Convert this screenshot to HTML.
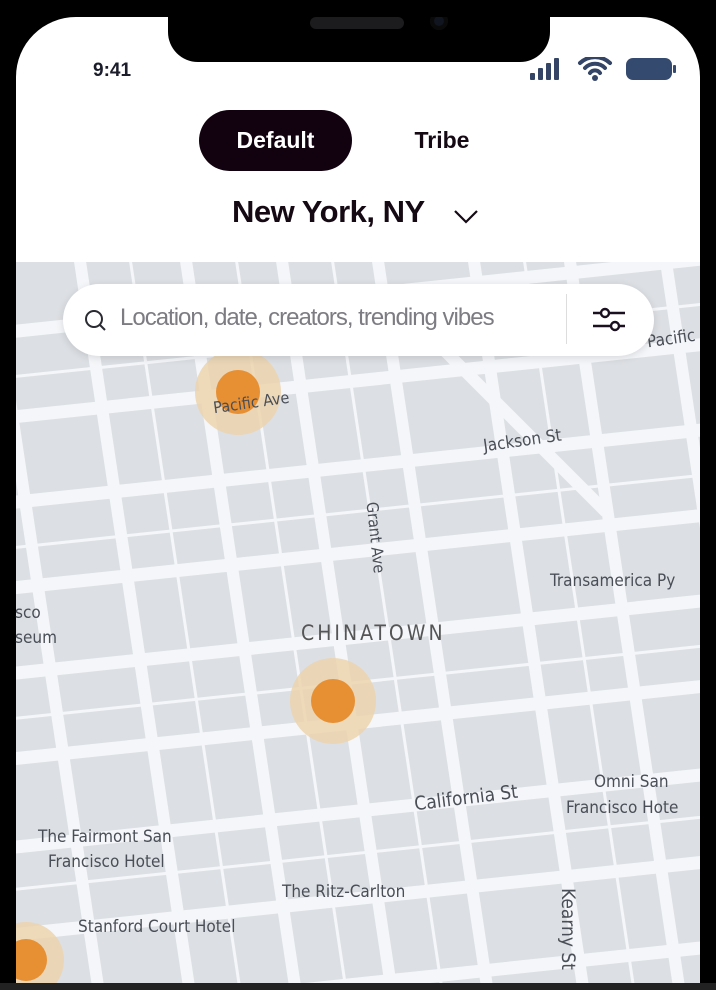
<!DOCTYPE html>
<html><head><meta charset="utf-8"><style>
html,body{margin:0;padding:0;background:#000;width:716px;height:990px;overflow:hidden;}
body{position:relative;font-family:"Liberation Sans",sans-serif;}
.screen{position:absolute;left:16px;top:17px;width:684px;height:966px;background:#fff;border-radius:60px 60px 0 0;overflow:hidden;}
.notch{position:absolute;left:152px;top:0;width:382px;height:45px;background:#000;border-radius:0 0 30px 30px;}
.spk{position:absolute;left:294px;top:0px;width:94px;height:12px;border-radius:6px;background:#1c1c1e;}
.cam{position:absolute;left:414px;top:-5px;width:18px;height:18px;border-radius:50%;background:#10151f;box-shadow:inset 0 0 0 4px #0a0a0a;}
.frame{position:absolute;left:0;top:983px;width:716px;height:7px;background:#222;}
.time{position:absolute;left:93px;top:60px;font-size:19px;font-weight:bold;color:#1b1d2b;}
.tab{position:absolute;top:110px;height:61px;font-size:23px;font-weight:bold;line-height:61px;text-align:center;}
.city{position:absolute;left:232px;top:194px;font-size:31px;color:#150a14;font-weight:bold;letter-spacing:-0.5px}
.search{position:absolute;left:63px;top:284px;width:591px;height:72px;border-radius:36px;background:#fff;box-shadow:0 2px 8px rgba(0,0,0,.12);}
.search .ph{position:absolute;left:57px;top:20px;font-size:24px;color:#7c7c82;letter-spacing:-1px;white-space:nowrap}
.lbl{position:absolute;font-family:"DejaVu Sans Condensed","DejaVu Sans",sans-serif;color:#4a4f57;font-size:17px;white-space:nowrap}
.wrap{position:absolute;left:0;top:0;width:716px;height:983px;overflow:hidden;}
</style></head><body>
<div class="wrap">
<div class="screen">
<svg style="position:absolute;left:0;top:245px" width="684" height="721">
<rect width="684" height="721" fill="#dcdfe3"/>
<g transform="rotate(-6 342 360)" stroke="#f4f6f9" fill="none">
<g stroke-width="13">
<line x1="-100" y1="120" x2="800" y2="120"/>
<line x1="-100" y1="205" x2="800" y2="205"/>
<line x1="-100" y1="290" x2="800" y2="290"/>
<line x1="-100" y1="375" x2="800" y2="375"/>
<line x1="-100" y1="460" x2="800" y2="460"/>
<line x1="-100" y1="548" x2="800" y2="548"/>
<line x1="-100" y1="635" x2="800" y2="635"/>
<line x1="-100" y1="720" x2="800" y2="720"/>
<line x1="-100" y1="35" x2="800" y2="35"/>
</g>
<g stroke-width="12">
<line x1="100" y1="-100" x2="140" y2="800"/>
<line x1="205" y1="-100" x2="245" y2="800"/>
<line x1="300" y1="-100" x2="340" y2="800"/>
<line x1="395" y1="-100" x2="435" y2="800"/>
<line x1="490" y1="-100" x2="530" y2="800"/>
<line x1="585" y1="-100" x2="625" y2="800"/>
<line x1="680" y1="-100" x2="720" y2="800"/>
<line x1="10" y1="-100" x2="50" y2="800"/>
</g>
<g stroke-width="3">
<line x1="150" y1="-100" x2="190" y2="800"/>
<line x1="255" y1="-100" x2="295" y2="800"/>
<line x1="350" y1="-100" x2="390" y2="800"/>
<line x1="540" y1="-100" x2="580" y2="800"/>
<line x1="-100" y1="80" x2="800" y2="80"/>
<line x1="-100" y1="250" x2="800" y2="250"/>
<line x1="-100" y1="420" x2="800" y2="420"/>
<line x1="-100" y1="590" x2="800" y2="590"/>
</g>
</g>
<line x1="420" y1="80" x2="590" y2="250" stroke="#f4f6f9" stroke-width="12"/>
<circle cx="222" cy="130" r="43" fill="#ecd3ae" opacity=".85"/>
<circle cx="222" cy="130" r="22" fill="#e68f33"/>
<circle cx="317" cy="439" r="43" fill="#ecd3ae" opacity=".85"/>
<circle cx="317" cy="439" r="22" fill="#e68f33"/>
<circle cx="10" cy="698" r="38" fill="#ecd3ae" opacity=".85"/>
<circle cx="10" cy="698" r="21" fill="#e68f33"/>
</svg>
<div class="notch"></div><div class="spk"></div><div class="cam"></div>
</div>
<div class="time">9:41</div>
<svg style="position:absolute;left:528px;top:57px" width="150" height="26">
<rect x="2" y="16" width="5" height="7" rx="1" fill="#334466"/><rect x="10" y="11" width="5" height="12" rx="1" fill="#334466"/><rect x="18" y="6" width="5" height="17" rx="1" fill="#334466"/><rect x="26" y="1" width="5" height="22" rx="1" fill="#334466"/>
<path d="M52 6a22 22 0 0 1 30 0M57 11a14 14 0 0 1 20 0M62 16a6 6 0 0 1 10 0" stroke="#334466" stroke-width="4" fill="none" stroke-linecap="round"/><circle cx="67" cy="21" r="3" fill="#334466"/>
<rect x="98" y="1" width="46" height="22" rx="7" fill="#344a6e"/><rect x="145" y="8" width="3" height="8" rx="1" fill="#344a6e"/>
</svg>
<div class="tab" style="left:199px;width:153px;background:#12020f;color:#fff;border-radius:31px;">Default</div>
<div class="tab" style="left:392px;width:100px;color:#150a14;">Tribe</div>
<div class="city">New York, NY</div>
<svg style="position:absolute;left:452px;top:206px" width="30" height="20"><path d="M3 5l11 11 11-11" stroke="#150a14" stroke-width="2.2" fill="none"/></svg>
<div class="lbl" style="left:483px;top:431px;transform:rotate(-8deg)">Jackson St</div>
<div class="lbl" style="left:213px;top:393px;transform:rotate(-8deg);font-size:16px">Pacific Ave</div>
<div class="lbl" style="left:647px;top:329px;transform:rotate(-8deg)">Pacific</div>
<div class="lbl" style="left:340px;top:528px;transform:rotate(84deg);font-size:16px">Grant Ave</div>
<div class="lbl" style="left:550px;top:571px">Transamerica Py</div>
<div class="lbl" style="left:15px;top:603px">sco</div>
<div class="lbl" style="left:15px;top:628px">seum</div>
<div class="lbl" style="left:301px;top:621px;font-size:21px;letter-spacing:3px;color:#555">CHINATOWN</div>
<div class="lbl" style="left:414px;top:787px;transform:rotate(-7deg);font-size:19px">California St</div>
<div class="lbl" style="left:594px;top:772px">Omni San</div>
<div class="lbl" style="left:566px;top:798px">Francisco Hote</div>
<div class="lbl" style="left:38px;top:827px">The Fairmont San</div>
<div class="lbl" style="left:48px;top:852px">Francisco Hotel</div>
<div class="lbl" style="left:282px;top:882px">The Ritz-Carlton</div>
<div class="lbl" style="left:78px;top:917px">Stanford Court Hotel</div>
<div class="lbl" style="left:527px;top:918px;transform:rotate(90deg);font-size:19px">Kearny St</div>
<div class="search">
<svg style="position:absolute;left:20px;top:24px" width="26" height="26"><circle cx="11" cy="11" r="8" stroke="#2a2a33" stroke-width="2" fill="none"/><path d="M17 17l5 5" stroke="#2a2a33" stroke-width="2"/></svg>
<div class="ph">Location, date, creators, trending vibes</div>
<div style="position:absolute;left:503px;top:10px;width:1px;height:50px;background:#ddd"></div>
<svg style="position:absolute;left:528px;top:20px" width="36" height="32"><path d="M2 9h32M2 22h32" stroke="#1a1020" stroke-width="2.4"/><circle cx="14" cy="9" r="4" fill="#fff" stroke="#1a1020" stroke-width="2.4"/><circle cx="24" cy="22" r="4" fill="#fff" stroke="#1a1020" stroke-width="2.4"/></svg>
</div>
</div>
<div class="frame"></div>
</body></html>
